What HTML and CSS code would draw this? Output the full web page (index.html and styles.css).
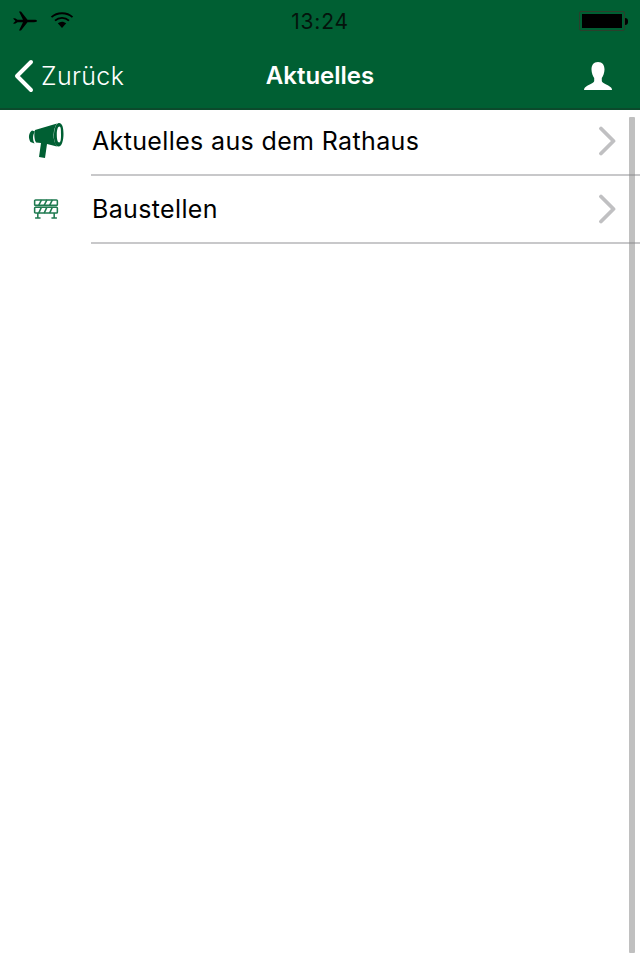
FILE: index.html
```html
<!DOCTYPE html>
<html lang="de">
<head>
<meta charset="utf-8">
<title>Aktuelles</title>
<link rel="stylesheet" href="styles.css">
</head>
<body>
<div class="screen">
  <header class="header">
    <div class="status">
      <div class="status-left">
        <svg class="plane" width="26" height="24" viewBox="0 0 26 24"><path d="M1 9.500 3.500 12 1 14.500 3 14.800 5.500 13.200H11L7 21.500H9L15.500 13.200H22C24 13.200 25 12.700 25 12S24 10.800 22 10.800H15.500L9 2.500H7L11 10.800H5.500L3 9.200Z" fill="#000"/></svg>
        <svg class="wifi" width="24" height="18" viewBox="0 0 24 18"><g fill="none" stroke="#000" stroke-width="1.800"><path d="M1.500 6.200C7 .9 17 .9 22.500 6.200"/><path d="M5 9.700C9 6 15 6 19 9.700"/></g><path d="M7.800 12.300C10.500 10.200 13.500 10.200 16.200 12.300L12 17Z" fill="#000"/></svg>
      </div>
      <div class="clock">13:24</div>
      <div class="battery"><div class="battery-body"><div class="battery-fill"></div></div><div class="battery-tip"></div></div>
    </div>
    <nav class="nav">
      <a class="back">
        <svg width="20" height="34" viewBox="0 0 20 34"><path d="M17 3 3 17 17 31" fill="none" stroke="#fff" stroke-width="4" stroke-linecap="round" stroke-linejoin="round"/></svg>
        <span>Zurück</span>
      </a>
      <h1 class="title">Aktuelles</h1>
      <svg class="user" width="30" height="30" viewBox="0 0 30 30"><path d="M15 1C19.500 1 21.500 4 21.500 8.500C21.500 12 20 15.500 18.800 17V20C18.800 22 25 23.500 28 26.500C29 27.500 29 29 29 29H1S1 27.500 2 26.500C5 23.500 11.200 22 11.200 20V17C10 15.500 8.500 12 8.500 8.500C8.500 4 10.500 1 15 1Z" fill="#fff"/></svg>
    </nav>
  </header>
  <ul class="list">
    <li class="row">
      <div class="row-icon">
        <svg width="38" height="38" viewBox="0 0 38 38"><g fill="#005f33"><path d="M5 8.500C1.500 11 1 16 3.500 20L7.500 21.500C5.500 17.500 5.500 13 8 9.500Z"/><path d="M8 8 30 1.500C26 7 25 18 30 24.500L20 22 18 36 12 35 14 21 9 20.500C7 17 7 11 8 8Z"/><path fill-rule="evenodd" d="M32 1C35.500 1 36.500 6 36.500 12S35 24.500 31.500 24.500C28 24.500 26.500 18 27 12S29 1 32 1ZM32.500 4.500C30.800 4.500 29.800 8 29.800 12.500S30.500 20.500 32.200 20.500 34 16.500 34 12.500 34 4.500 32.500 4.500Z"/></g></svg>
      </div>
      <span class="row-label">Aktuelles aus dem Rathaus</span>
      <svg class="chevron" width="18" height="30" viewBox="0 0 18 30"><path d="M3 2.500 15.500 15 3 27.500" fill="none" stroke="#c0c0c2" stroke-width="3.800" stroke-linecap="round" stroke-linejoin="round"/></svg>
    </li>
    <li class="row">
      <div class="row-icon">
        <svg width="26" height="20" viewBox="0 0 28 22"><g fill="none" stroke="#1f7a50" stroke-width="1.700"><rect x="1.500" y="1" width="25" height="6" rx="1"/><rect x="1.500" y="9" width="25" height="6.500" rx="1"/><path d="M6 7 9 1M12 7 15 1M18 7 21 1M6 15.500 9 9M12 15.500 15 9M18 15.500 21 9M5 15.500V21M23 15.500V21M2 21H8M20 21H26"/></g></svg>
      </div>
      <span class="row-label">Baustellen</span>
      <svg class="chevron" width="18" height="30" viewBox="0 0 18 30"><path d="M3 2.500 15.500 15 3 27.500" fill="none" stroke="#c0c0c2" stroke-width="3.800" stroke-linecap="round" stroke-linejoin="round"/></svg>
    </li>
  </ul>
  <div class="scrollbar"></div>
</div>
</body>
</html>
```
FILE: styles.css
```css
* { box-sizing: border-box; }
html, body { margin: 0; padding: 0; background: #fff; }
.screen { position: relative; width: 640px; height: 960px; overflow: hidden; font-family: Inter, Roboto, "Liberation Sans", sans-serif; background: #fff; }
.header { position: relative; z-index: 1; height: 110px; background: #005f33; border-bottom: 2px solid #0b4a2c; }
.status { height: 42px; display: flex; align-items: center; justify-content: space-between; padding: 0 11px 0 12px; position: relative; }
.status-left { display: flex; align-items: center; gap: 12px; }
.wifi { margin-top: -3px; }
.clock { position: absolute; left: 0; right: 0; text-align: center; font-size: 21px; color: #04140c; letter-spacing: .8px; font-weight: 400; }
.battery { display: flex; align-items: center; margin-right: 1px; }
.battery-body { width: 46px; height: 20px; border: 1px solid #2c3f2c; padding: 2px; border-radius: 2px; }
.battery-fill { height: 100%; background: #000; }
.battery-tip { width: 3px; height: 7px; background: #000; border-radius: 0 3px 3px 0; }
.nav { height: 66px; display: flex; align-items: center; justify-content: space-between; padding: 2px 27px 0 14px; position: relative; color: #fff; }
.back { display: flex; align-items: center; gap: 7px; font-size: 25px; font-weight: 300; letter-spacing: .35px; }
.title { position: absolute; left: 0; right: 0; margin: 0; text-align: center; font-size: 24px; font-weight: 600; line-height: 68px; top: 0; }
.list { list-style: none; margin: -2px 0 0; padding: 0; }
.row { position: relative; height: 68px; display: flex; align-items: center; padding: 0 24px 2px 0; }
.row::after { content: ""; position: absolute; left: 91px; right: 0; bottom: 0; height: 2px; background: #c8c8ca; }
.row-icon { width: 92px; display: flex; justify-content: center; padding-right: 1px; }
.row-label { flex: 1; font-size: 25px; color: #000; letter-spacing: .36px; }
.scrollbar { position: absolute; left: 629px; top: 117px; width: 6px; height: 836px; background: rgba(130,130,130,.5); border-radius: 1px; }
```
